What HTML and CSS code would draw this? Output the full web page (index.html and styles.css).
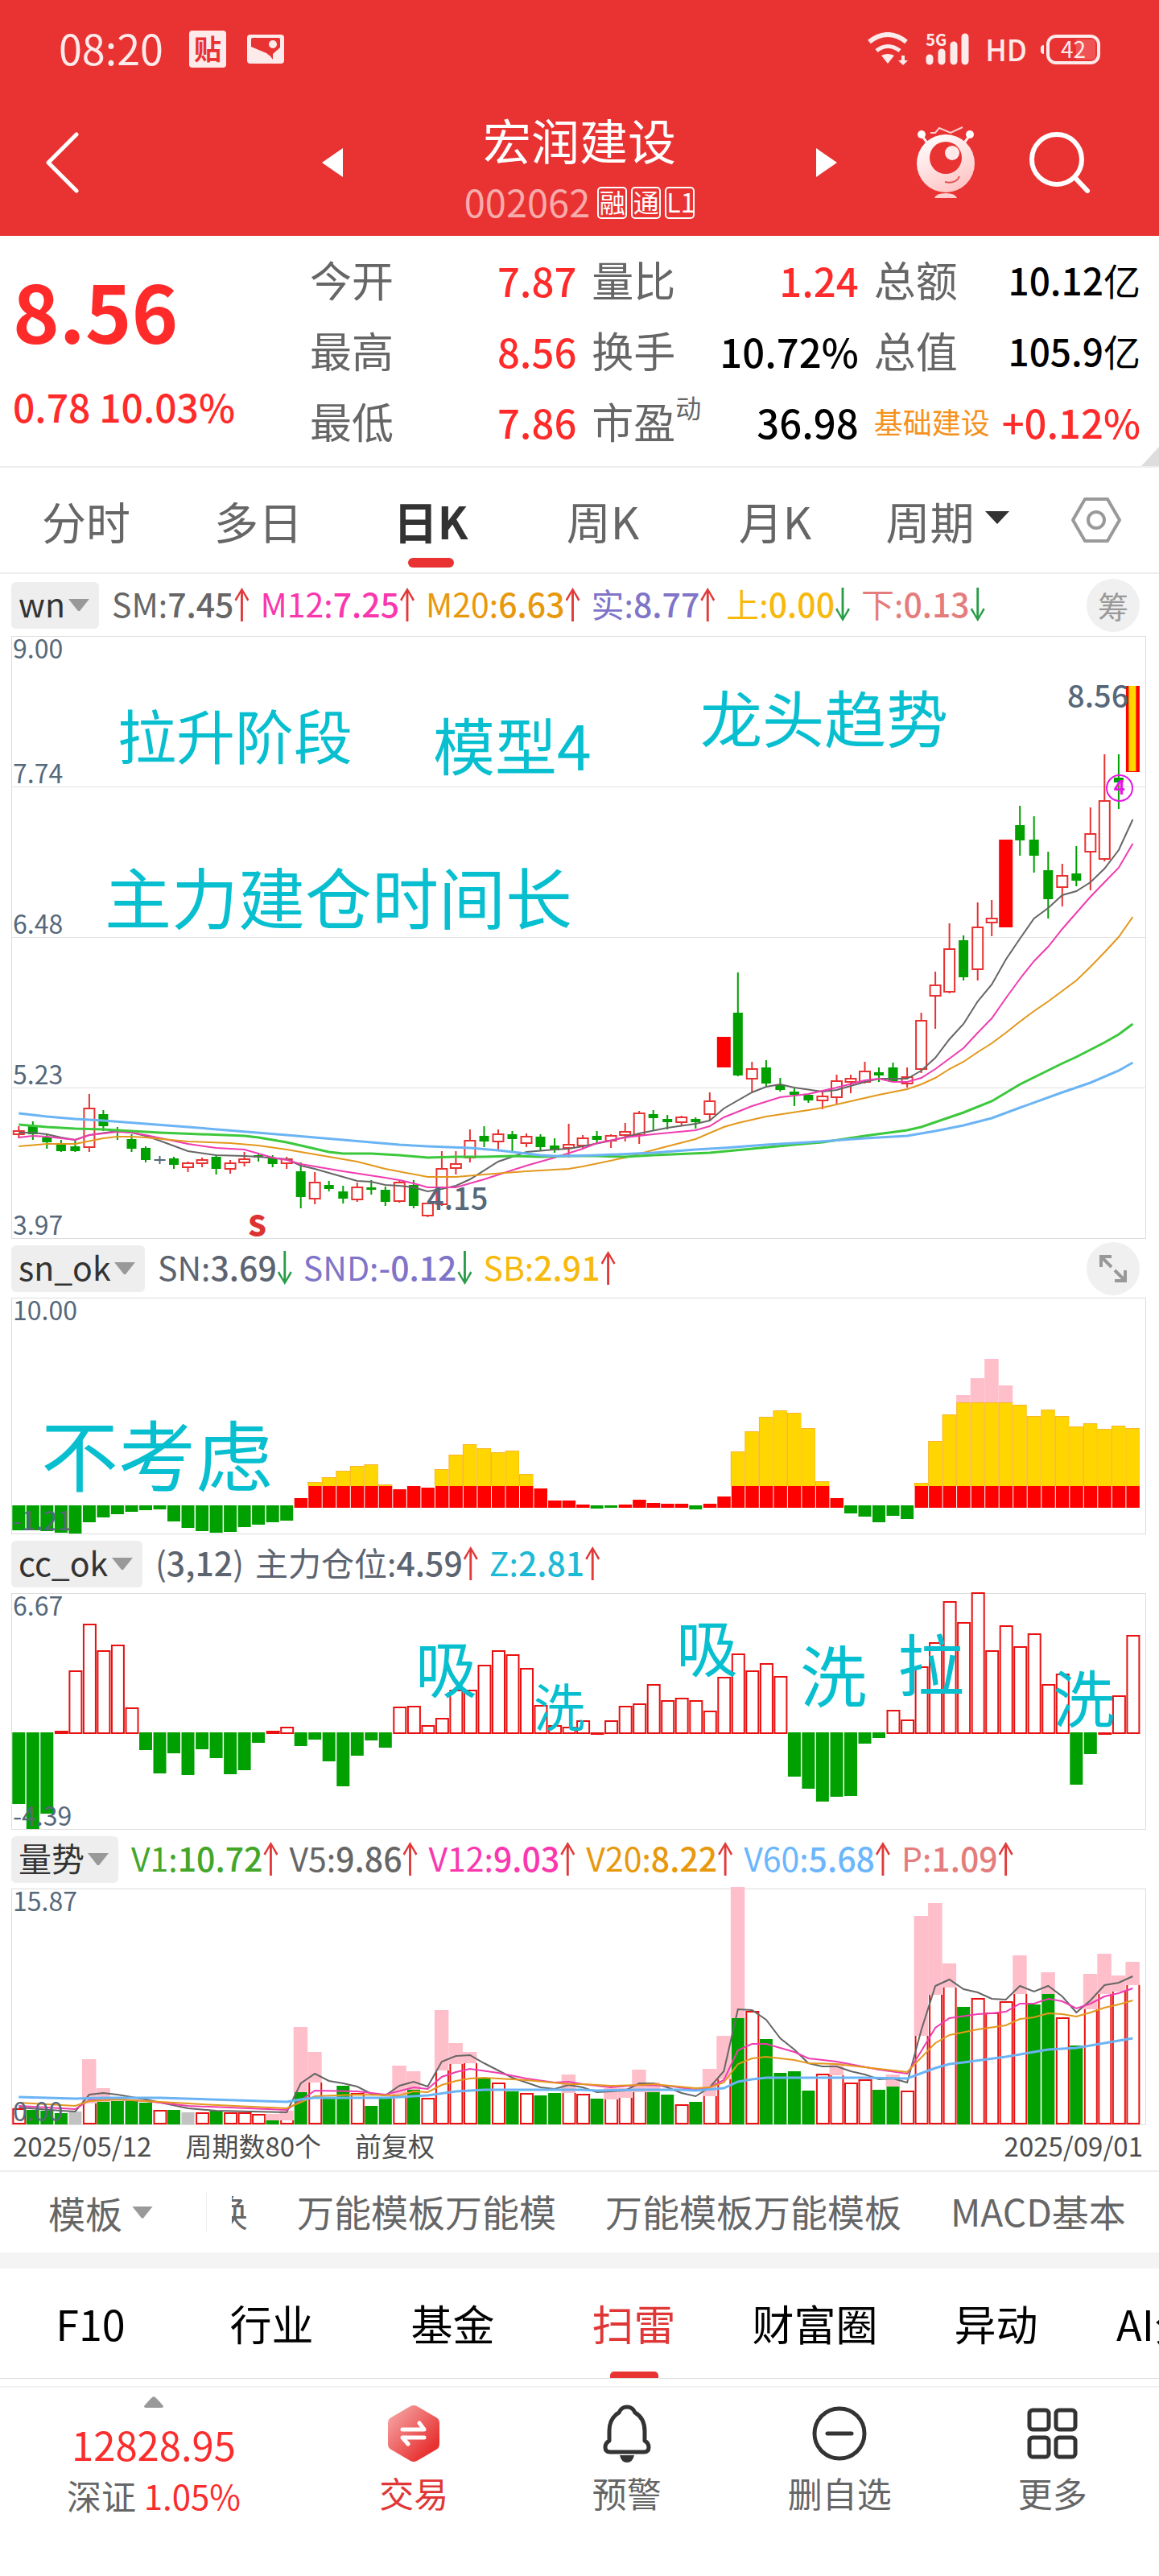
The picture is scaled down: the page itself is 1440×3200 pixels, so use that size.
FILE: index.html
```html
<!DOCTYPE html>
<html lang="zh-CN">
<head>
<meta charset="utf-8">
<meta name="viewport" content="width=device-width, initial-scale=1">
<title>宏润建设 002062</title>
<link rel="stylesheet" href="styles.css">
</head>
<body>
<header class="top">
  <div class="status">
    <div class="status-side">
      <span class="clock">08:20</span>
      <span class="badge">贴</span>
      <svg class="pic" width="46" height="36" viewBox="0 0 46 36" aria-hidden="true"><rect width="46" height="36" rx="4" fill="#fdeaea"/><path d="M5 6q0-2 2-2h32q2 0 2 2v10l-9 8v7q-3-5-8-8L5 15z" fill="#e93232"/><circle cx="32" cy="12" r="5" fill="#fdeaea"/></svg>
    </div>
    <div class="status-side">
      <svg width="52" height="42" viewBox="0 0 52 42" fill="none" stroke="#fdeaea" aria-hidden="true"><path d="M2 12Q25-6 48 12" stroke-width="6"/><path d="M11 23Q25 12 40 23" stroke-width="5"/><path d="M17 29q8-4 16 0l-8 10z" fill="#fdeaea" stroke="none"/><path d="M42 29h4v6h4l-6 6-6-6h4z" fill="#fdeaea" stroke="none"/></svg>
      <span class="signal"><small>5G</small>
        <svg width="54" height="40" viewBox="0 0 54 40" stroke="#fdeaea" stroke-width="9" stroke-linecap="round" aria-hidden="true"><path d="M5 31v4M20 24v11M35 15v20M49 5v30"/></svg>
      </span>
      <b class="hd">HD</b>
      <span class="battery"><i></i><em>42</em></span>
    </div>
  </div>
  <div class="title-bar">
    <button class="icon-btn back" aria-label="返回"><svg width="42" height="76" viewBox="0 0 42 76" fill="none" stroke="#fff" stroke-width="5" stroke-linecap="round" stroke-linejoin="round"><path d="M38 3L3 38l35 35"/></svg></button>
    <div class="title-mid">
      <button class="icon-btn" aria-label="上一只"><svg width="26" height="36" viewBox="0 0 26 36"><path d="M26 0v36L0 18z" fill="#fff"/></svg></button>
      <div class="name">
        <h1>宏润建设</h1>
        <p><span class="code">002062</span><span class="chip">融</span><span class="chip">通</span><span class="chip">L1</span></p>
      </div>
      <button class="icon-btn" aria-label="下一只"><svg width="26" height="36" viewBox="0 0 26 36"><path d="M0 0v36l26-18z" fill="#fff"/></svg></button>
    </div>
    <div class="title-tools">
      <button class="icon-btn" aria-label="智能助手"><svg width="74" height="92" viewBox="0 0 74 92" fill="none">
        <defs><linearGradient id="face" x1="0.2" y1="0" x2="0.7" y2="1"><stop offset="0" stop-color="#fff"/><stop offset="1" stop-color="#ffc2c2"/></linearGradient></defs>
        <path d="M7 12l9 12M67 12l-9 12" stroke="#ffecec" stroke-width="3"/><circle cx="7" cy="11" r="5" fill="#fff"/><circle cx="67" cy="11" r="5" fill="#fff"/>
        <path d="M18 9l6 0 5-6 14 6L58 2" stroke="#ffd0d0" stroke-width="2"/>
        <circle cx="37" cy="47" r="36" fill="url(#face)"/><circle cx="37" cy="40" r="20" fill="#e93232"/><circle cx="45" cy="34" r="9" fill="#ffeaea"/>
        <path d="M36 70q14 3 18-7" stroke="#e05050" stroke-width="2"/><path d="M23 90q2-6 14-6t14 6z" fill="#ffd0d0"/></svg></button>
      <button class="icon-btn" aria-label="搜索"><svg width="78" height="78" viewBox="0 0 78 78" fill="none" stroke="#fff" stroke-width="6" stroke-linecap="round"><circle cx="35" cy="35" r="31"/><path d="M57 57l16 17"/></svg></button>
    </div>
  </div>
</header>

<section class="quote">
  <div class="last"><strong>8.56</strong><span>0.78 10.03%</span></div>
  <dl class="stats">
    <div><dt>今开</dt><dd class="up">7.87</dd></div>
    <div><dt>量比</dt><dd class="up">1.24</dd></div>
    <div><dt>总额</dt><dd class="big">10.12<small>亿</small></dd></div>
    <div><dt>最高</dt><dd class="up">8.56</dd></div>
    <div><dt>换手</dt><dd>10.72%</dd></div>
    <div><dt>总值</dt><dd class="big">105.9<small>亿</small></dd></div>
    <div><dt>最低</dt><dd class="up">7.86</dd></div>
    <div><dt>市盈<sup>动</sup></dt><dd>36.98</dd></div>
    <div><dt class="sector">基础建设</dt><dd class="up">+0.12%</dd></div>
  </dl>
</section>

<nav class="periods">
  <button>分时</button><button>多日</button><button class="on">日K</button><button>周K</button><button>月K</button>
  <label class="pick"><select aria-label="周期"><option>周期</option></select><svg width="30" height="16" viewBox="0 0 30 16"><path d="M0 0h30L15 16z" fill="#333"/></svg></label>
  <button aria-label="设置"><svg width="64" height="58" viewBox="0 0 64 58" fill="none" stroke="#999" stroke-width="4" stroke-linejoin="round"><path d="M18 3h28l15 26-15 26H18L3 29z"/><circle cx="32" cy="29" r="10"/></svg></button>
</nav>

<main class="charts">
  <div class="legend">
    <label class="tag"><select aria-label="主图指标"><option>wn</option></select><i></i></label>
    <span class="c-gray rise">SM:<b>7.45</b></span><span class="c-pink rise">M12:<b>7.25</b></span><span class="c-orange rise">M20:<b>6.63</b></span><span class="c-violet rise">实:<b>8.77</b></span><span class="c-gold fall">上:<b>0.00</b></span><span class="c-rose fall">下:<b>0.13</b></span>
    <button class="round">筹</button>
  </div>
  <div class="plot tall">
    <svg id="k" viewBox="0 0 1410 749" preserveAspectRatio="none"></svg>
    <span class="axis first">9.00</span><span class="axis" data-y="159">7.74</span><span class="axis" data-y="346">6.48</span><span class="axis" data-y="533">5.23</span><span class="axis last-axis">3.97</span>
    <span class="note n72" data-x="132" data-y="85">拉升阶段</span>
    <span class="note n76" data-x="524" data-y="95">模型4</span>
    <span class="note n76" data-x="856" data-y="61">龙头趋势</span>
    <span class="note n82" data-x="116" data-y="281">主力建仓时间长</span>
    <span class="mark" data-x="1312" data-y="54">8.56</span>
    <span class="mark" data-x="516" data-y="678">4.15</span>
    <span class="mark sell" data-x="294" data-y="712">S</span>
    <span class="ring" data-x="1360" data-y="172">4</span>
  </div>

  <div class="legend">
    <label class="tag"><select aria-label="副图一指标"><option>sn_ok</option></select><i></i></label>
    <span class="c-slate fall">SN:<b>3.69</b></span><span class="c-violet fall">SND:<b>-0.12</b></span><span class="c-gold rise">SB:<b>2.91</b></span>
    <button class="round" aria-label="展开"><svg width="34" height="34" viewBox="0 0 34 34" fill="none" stroke="#999" stroke-width="4"><path d="M2 15V2h13M2 2l13 13M32 19v13H19M32 32L19 19"/></svg></button>
  </div>
  <div class="plot">
    <svg id="sn" viewBox="0 0 1410 294" preserveAspectRatio="none"></svg>
    <span class="axis first">10.00</span><span class="axis last-axis">-1.21</span>
    <span class="note n96" data-x="37" data-y="144">不考虑</span>
  </div>

  <div class="legend">
    <label class="tag"><select aria-label="副图二指标"><option>cc_ok</option></select><i></i></label>
    <span class="c-slate plain">(<b>3,12</b>)</span><span class="c-slate rise">主力仓位:<b>4.59</b></span><span class="c-cyan rise">Z:<b>2.81</b></span>
  </div>
  <div class="plot">
    <svg id="cc" viewBox="0 0 1410 294" preserveAspectRatio="none"></svg>
    <span class="axis first">6.67</span><span class="axis last-axis">-4.39</span>
    <span class="note n76" data-x="502" data-y="52">吸</span>
    <span class="note n64" data-x="649" data-y="106">洗</span>
    <span class="note n76" data-x="826" data-y="26">吸</span>
    <span class="note n82" data-x="980" data-y="58">洗</span>
    <span class="note n82" data-x="1101" data-y="44">拉</span>
    <span class="note n76" data-x="1294" data-y="89">洗</span>
  </div>

  <div class="legend">
    <label class="tag"><select aria-label="副图三指标"><option>量势</option></select><i></i></label>
    <span class="c-green rise">V1:<b>10.72</b></span><span class="c-gray rise">V5:<b>9.86</b></span><span class="c-pink rise">V12:<b>9.03</b></span><span class="c-orange rise">V20:<b>8.22</b></span><span class="c-blue rise">V60:<b>5.68</b></span><span class="c-rose rise">P:<b>1.09</b></span>
  </div>
  <div class="plot">
    <svg id="vol" viewBox="0 0 1410 294" preserveAspectRatio="none"></svg>
    <span class="axis first">15.87</span><span class="axis last-axis">0.00</span>
  </div>
  <div class="dates"><span>2025/05/12</span><span>周期数80个</span><span>前复权</span><span class="end">2025/09/01</span></div>
</main>

<div class="templates">
  <label class="pick"><select aria-label="模板"><option>模板</option></select><i></i></label>
  <div class="template-list">
    <button class="cut"><span>切换</span></button><button>万能模板万能模</button><button>万能模板万能模板</button><button>MACD基本</button>
  </div>
</div>

<nav class="sections">
  <a href="#f10">F10</a><a href="#industry">行业</a><a href="#fund">基金</a><a href="#risk" class="on">扫雷</a><a href="#wealth">财富圈</a><a href="#moves">异动</a><a href="#ai">AI分析</a>
</nav>

<footer class="dock">
  <a class="index" href="#index">
    <svg width="26" height="14" viewBox="0 0 26 14"><path d="M13 0q2 0 12 12 0 2-2 2H3q-2 0-2-2Q11 0 13 0z" fill="#999"/></svg>
    <b>12828.95</b><span>深证 <em>1.05%</em></span>
  </a>
  <button class="trade"><svg width="64" height="72" viewBox="0 0 64 72" fill="none">
    <defs><linearGradient id="hex" x1="0" y1="0" x2="1" y2="1"><stop offset="0.1" stop-color="#f5a0a0"/><stop offset="0.8" stop-color="#e83232"/></linearGradient></defs>
    <path d="M28 2q4-2 8 0l24 14q4 2 4 7v26q0 5-4 7L36 70q-4 2-8 0L4 56q-4-2-4-7V23q0-5 4-7z" fill="url(#hex)"/><path d="M18 31h27l-6-8M45 41H18l7 8" stroke="#fff" stroke-width="5" stroke-linecap="round" stroke-linejoin="round"/></svg>交易</button>
  <button><svg width="64" height="72" viewBox="0 0 64 72" fill="none"><path d="M32 3q7 0 10 7 12 7 12 23v12q5 3 5 8 0 6-6 6H11q-6 0-6-6 0-5 5-8V33q0-16 12-23 3-7 10-7z" stroke="#333" stroke-width="5" stroke-linejoin="round"/><path d="M23 63h18q-2 9-9 9t-9-9z" fill="#333"/></svg>预警</button>
  <button><svg width="72" height="72" viewBox="0 0 72 72" fill="none" stroke="#333" stroke-width="5" stroke-linecap="round"><circle cx="36" cy="36" r="31"/><path d="M21 36h30"/></svg>删自选</button>
  <button><svg width="72" height="72" viewBox="0 0 72 72" fill="none" stroke="#333" stroke-width="5"><rect x="7" y="7" width="24" height="24" rx="4"/><rect x="40" y="7" width="24" height="24" rx="4"/><rect x="7" y="41" width="24" height="24" rx="4"/><rect x="40" y="41" width="24" height="24" rx="4"/></svg>更多</button>
</footer>
<script src="charts.js"></script>
</body>
</html>
```
FILE: styles.css
```css
* { box-sizing: border-box; margin: 0; padding: 0; }
body { min-height: 100vh; display: flex; flex-direction: column; background: #fff; color: #000; font-family: "Noto Sans CJK SC", "Noto Sans", sans-serif; font-size: 48px; line-height: 1; overflow-x: hidden; }
button, select { font: inherit; color: inherit; border: 0; background: none; appearance: none; white-space: nowrap; }
a { color: inherit; text-decoration: none; }
i, em { font-style: normal; }
svg { display: block; flex: none; }

.top { background: #e93232; color: #fff; padding-bottom: 8px; }
.status { display: flex; justify-content: space-between; align-items: center; height: 122px; padding: 0 73px; color: #fdeaea; }
.status-side { display: flex; align-items: center; gap: 20px; }
.clock { font-size: 52px; line-height: 48px; margin: 0 12px 4px 0; }
.badge { width: 46px; height: 46px; margin-right: 6px; border-radius: 4px; background: #fdeaea; color: #e93232; font-size: 34px; font-weight: 700; line-height: 43px; text-align: center; }
.signal { position: relative; }
.signal small { position: absolute; left: 0; top: -2px; font-size: 20px; font-weight: 700; }
.hd { font-size: 36px; line-height: 40px; font-weight: 500; padding-bottom: 2px; }
.battery { position: relative; width: 67px; height: 37px; margin-left: 4px; border: 4px solid #fdeaea; border-radius: 12px; font-size: 28px; line-height: 26px; text-align: center; }
.battery::before { content: ""; position: absolute; left: -11px; top: 9px; width: 4px; height: 11px; border-radius: 4px 0 0 4px; background: #fdeaea; }
.battery i { position: absolute; right: 2px; top: 2px; width: 24px; height: 25px; border-radius: 0 4px 4px 0; background: #f05353; }
.battery em { position: relative; }

.title-bar { display: grid; grid-template-columns: 1fr 640px 1fr; align-items: center; height: 163px; padding-bottom: 4px; }
.icon-btn { display: block; }
.back { margin-left: 57px; }
.title-mid { display: flex; align-items: center; justify-content: space-between; }
.name { padding-top: 10px; text-align: center; }
.name h1 { font-size: 60px; font-weight: 400; line-height: 76px; }
.name p { display: flex; align-items: center; gap: 5px; padding-top: 14px; }
.code { font-size: 47px; line-height: 50px; color: #f9abab; margin: 0 4px 4px 0; }
.chip { width: 37px; height: 40px; border: 2px solid #fff; border-radius: 5px; font-size: 32px; line-height: 33px; text-align: center; }
.title-tools { display: flex; align-items: center; justify-content: flex-end; gap: 66px; padding-right: 84px; }

.quote { position: relative; display: flex; min-height: 288px; padding: 10px 23px 10px 16px; border-bottom: 2px solid #eee; }
.quote::after { content: ""; position: absolute; right: 0; bottom: 0; width: 22px; height: 24px; background: #ddd; clip-path: polygon(100% 0, 100% 100%, 0 100%); }
.last { width: 369px; color: #ff2a2a; }
.last strong { display: block; padding-top: 27px; font-size: 98px; line-height: 108px; font-weight: 700; }
.last span { display: block; padding-top: 42px; font-size: 48px; line-height: 48px; font-weight: 500; white-space: nowrap; }
.stats { flex: 1; display: grid; grid-template-columns: repeat(3, 1fr); grid-auto-rows: 88px; column-gap: 19px; }
.stats div { display: flex; align-items: center; justify-content: space-between; white-space: nowrap; }
.stats dt { font-size: 52px; color: #666; }
.stats dt sup { font-size: 32px; line-height: 0; vertical-align: 26px; }
.stats dd { font-size: 49px; font-weight: 500; }
.stats .big { font-size: 46px; }
.stats .big small { font-size: 46px; font-weight: 400; }
.stats .sector { font-size: 36px; color: #f5921e; }
.stats .up { color: #ff2a2a; }

.periods { display: grid; grid-template-columns: repeat(6, 214fr) 156fr; height: 132px; border-bottom: 2px solid #eee; color: #666; font-size: 55px; }
.periods > * { position: relative; display: flex; align-items: center; justify-content: center; }
.periods .on { color: #333; font-weight: 700; }
.periods .on::after { content: ""; position: absolute; bottom: 6px; left: calc(50% - 28px); width: 57px; height: 12px; border-radius: 6px; background: #e93232; }
.pick { gap: 12px; }
.pick svg { margin-bottom: 6px; }

.charts { padding: 0 16px 0 14px; }
.legend { display: flex; align-items: center; gap: 14px; height: 73px; font-size: 41px; white-space: nowrap; }
.legend:first-child { height: 77px; }
.tag { display: flex; align-items: center; gap: 4px; height: 58px; margin-right: 2px; padding: 0 12px 0 9px; border-radius: 6px; background: #eee; color: #333; font-size: 41px; }
.tag select { height: 58px; line-height: 52px; padding-bottom: 6px; }
.tag i, .templates i { width: 26px; height: 15px; background: #999; clip-path: polygon(0 0, 100% 0, 54% 100%, 46% 100%); }
.rise, .fall, .plain { display: flex; align-items: center; line-height: 48px; padding-bottom: 6px; }
.legend b { font-weight: 500; }
.rise::after, .fall::after { content: ""; width: 18px; height: 42px; margin: 5px 0 0 1px; background: #e03a3a; clip-path: polygon(50% 0, 100% 36%, 88% 40%, 58% 16%, 58% 100%, 42% 100%, 42% 16%, 12% 40%, 0 36%); }
.fall::after { background: #2a9d4a; clip-path: polygon(50% 100%, 100% 64%, 88% 60%, 58% 84%, 58% 0, 42% 0, 42% 84%, 12% 60%, 0 64%); }
.round { display: flex; align-items: center; justify-content: center; width: 66px; height: 66px; margin: 0 8px 0 auto; border-radius: 50%; background: #f0f0f0; color: #999; font-size: 38px; }
.c-gray { color: #666; }
.c-slate { color: #5c6470; }
.c-pink { color: #fa37ae; }
.c-orange { color: #e8980c; }
.c-violet { color: #8074c8; }
.c-gold { color: #f7b90c; }
.c-rose { color: #e57c7c; }
.c-cyan { color: #1cbad6; }
.c-green { color: #43a629; }
.c-blue { color: #6bb6fc; }

.plot { position: relative; }
.plot svg { width: 100%; height: 294px; overflow: visible; }
.plot.tall svg { height: 749px; }
.plot span { position: absolute; white-space: nowrap; }
.axis { left: 2px; color: #56687a; font-size: 32px; line-height: 20px; }
.axis.first { top: 4px; }
.axis.last-axis { bottom: 9px; }
.note { color: #08bfd0; }
.n64 { font-size: 64px; }
.n72 { font-size: 73px; }
.n76 { font-size: 77px; }
.n82 { font-size: 83px; }
.n96 { font-size: 96px; }
.mark { color: #56687a; font-size: 38px; font-weight: 500; }
.mark.sell { color: #dc3232; font-size: 36px; font-weight: 900; }
.ring { width: 34px; height: 34px; border: 2px solid #e815e8; border-radius: 50%; color: #e815e8; font-size: 24px; font-weight: 700; line-height: 26px; text-align: center; }
.dates { display: flex; align-items: center; gap: 42px; height: 56px; padding: 0 4px 6px 2px; color: #4d4d4d; font-size: 33px; }
.dates .end { margin-left: auto; }

.templates { display: flex; align-items: center; height: 122px; border-top: 2px solid #eee; border-bottom: 20px solid #f4f4f4; color: #666; font-size: 46px; }
.templates .pick { display: flex; align-items: center; flex: none; width: 257px; height: 50px; padding-left: 60px; border-right: 1px solid #eee; }
.pick select { line-height: 64px; height: 68px; }
.template-list { display: flex; align-items: center; gap: 61px; padding-left: 31px; overflow: hidden; height: 80px; }
.template-list button { flex: none; line-height: 68px; padding-bottom: 4px; }
.template-list .cut { display: flex; justify-content: flex-end; width: 20px; overflow: hidden; }

.sections { display: flex; height: 137px; border-bottom: 1px solid #ddd; overflow: hidden; font-size: 52px; white-space: nowrap; }
.sections a { position: relative; display: flex; flex: 0 0 225px; align-items: center; justify-content: center; }
.sections .on { color: #e03636; }
.sections .on::after { content: ""; position: absolute; bottom: 0; left: calc(50% - 30px); width: 60px; height: 8px; border-radius: 5px 5px 0 0; background: #e93232; }

.dock { flex: 1; display: grid; grid-template-columns: 382px repeat(4, 1fr); align-items: start; margin-top: 9px; padding-top: 11px; border-top: 2px solid #f2f2f2; color: #666; font-size: 43px; }
.dock button { display: flex; flex-direction: column; align-items: center; gap: 12px; padding-top: 10px; line-height: 50px; }
.dock .trade { color: #e03636; }
.index { display: flex; flex-direction: column; align-items: center; }
.index b { padding: 20px 0 13px; font-size: 49px; line-height: 50px; font-weight: 400; color: #fa2d2d; }
.index span { line-height: 50px; }
.index em { font-size: 42px; color: #fa2d2d; }
```
FILE: charts.js
```js
const COUNT = 80, STEP = 17.52, FIRST = 9.3, WIDTH = 1410;
const RED = '#e83232', HOLLOW = '#e81010', GREEN = '#00a000', GOLD = '#ffd600', PINK = '#ffbfca';
const cx = i => FIRST + STEP * i;
const rect = (x, y, w, h, fill, stroke) =>
  `<rect x="${x.toFixed(1)}" y="${y}" width="${w}" height="${Math.max(h, 1)}" fill="${fill}"${stroke ? ` stroke="${stroke}" stroke-width="2"` : ''}/>`;
const frame = h => `<rect x=".5" y=".5" width="${WIDTH - 1}" height="${h - 1}" fill="none" stroke="#ddd"/>`;
const line = (text, color, w) => {
  const pts = text.split(' ').map(p => { const [i, y] = p.split(':'); return cx(+i).toFixed(1) + ',' + y; });
  return `<polyline points="${pts.join(' ')}" fill="none" stroke="${color}" stroke-width="${w}"/>`;
};

// kind, high, body top, body bottom, low
const candles = `r 609 614 620 624|g 603 609 619 626|g 619 623 629 637|g 626 632 640 641|g 627 634 640 641|r 569 586 636 641|g 589 594 609 615|g 610 615 617 626|g 619 625 637 641|g 634 636 651 654
x 646 650 651 656|g 647 649 657 662|r 653 654 661 666|r 648 650 656 660|g 645 647 662 669|r 651 654 663 668|r 641 649 655 659|g 643 645 648 653|g 645 648 656 660|r 647 649 656 662
g 654 665 697 711|r 666 678 700 706|g 677 682 687 690|g 683 690 699 705|r 679 684 701 703|g 676 685 688 694|g 684 688 703 708|r 676 678 703 704|g 676 682 708 711|r 704 704 721 722
r 640 661 707 708|r 640 655 662 669|r 613 626 649 654|g 609 621 628 635|r 613 618 629 638|g 615 619 625 641|r 618 621 631 635|g 619 622 635 640|g 624 633 639 642|r 606 631 637 648
r 620 623 634 638|g 615 621 626 630|r 619 620 628 636|r 605 615 621 628|r 590 592 621 631|g 589 594 599 614|g 595 600 604 613|r 596 597 605 608|g 598 600 604 612|r 567 577 595 602
R 498 498 536 536|g 418 468 546 547|r 529 537 551 566|g 527 536 556 559|g 549 558 564 566|g 562 566 570 584|g 569 570 577 580|r 565 571 578 588|r 545 552 574 581|r 545 549 555 568
r 529 540 555 555|g 536 542 546 554|g 530 536 554 555|r 536 547 557 561|r 468 477 539 543|r 417 433 448 488|r 357 388 443 444|g 372 378 424 428|r 331 361 415 428|r 328 350 357 373
R 253 253 362 362|g 211 235 254 273|g 224 253 273 294|g 268 291 327 351|r 283 297 313 336|g 261 295 304 311|r 213 245 269 316|r 147 204 278 280|g 147 176 182 215|Y 62 62 169 170`.split(/[|\n]/);

let out = frame(749);
for (const y of [187, 374, 561]) out += `<path d="M0 ${y}.5H${WIDTH}" stroke="#e2e2e2"/>`;
candles.forEach((row, i) => {
  const [k, ...v] = row.split(' '), [hi, top, bot, lo] = v.map(Number), x = cx(i);
  if (k === 'R') out += rect(x - 8.5, top, 17, bot - top, '#f00');
  else if (k === 'Y') out += rect(x - 8.5, top, 17, bot - top, '#f00') + rect(x - 5, top, 9, bot - top - 1, GOLD);
  else if (k === 'x') out += `<path d="M${x} ${hi}V${lo}M${x - 7} 651H${x + 7}" stroke="#56687a" stroke-width="2"/>`;
  else if (k === 'g') out += rect(x - 1, hi, 2, lo - hi, GREEN) + rect(x - 6, top, 12, bot - top, GREEN);
  else out += rect(x - 1, hi, 2, top - hi, RED) + rect(x - 1, bot, 2, lo - bot, RED) + rect(x - 6.5, top + 1, 13, bot - top - 2, 'none', RED);
});
out += line('0:617 1:617 2:619 3:623 4:626 5:620 7:615 8:617 9:621 10:627 12:640 14:645 16:646 17:647 19:650 20:658 21:662 22:667 24:677 25:678 26:682 27:683 28:685 29:690 30:687 31:683 32:675 34:653 36:641 38:638 39:637 40:634 42:627 44:618 46:611 48:606 49:602 50:587 52:567 53:560 54:557 55:561 57:566 58:564 60:554 61:550 63:550 64:540 65:524 66:501 67:482 68:454 69:433 70:402 71:376 72:351 73:338 74:322 75:317 76:306 77:289 78:266 79:228', '#666', 2);
out += line('0:623 1:621 2:622 4:626 5:620 7:616 8:617 9:620 12:631 14:636 16:638 18:648 19:651 20:656 23:665 26:673 27:676 28:680 29:685 31:685 33:675 36:658 38:648 40:637 41:630 43:623 45:619 48:614 49:609 50:598 52:584 54:573 56:569 58:561 60:552 61:550 62:554 63:554 64:549 65:538 66:525 67:512 68:493 69:475 70:450 71:426 72:404 73:386 74:364 75:344 76:324 77:306 78:288 79:258', '#f03cb0', 2);
out += line('0:634 2:631 4:631 6:624 7:622 8:622 9:623 12:628 15:630 17:633 19:638 21:644 24:653 26:662 29:672 31:672 33:669 36:665 39:662 40:659 43:648 46:634 48:625 50:610 51:605 53:597 56:589 57:586 61:570 63:563 64:557 65:549 66:538 67:529 68:517 69:506 70:493 71:479 72:466 73:454 74:441 75:428 76:411 77:393 78:374 79:349', '#e3981c', 2);
out += line('0:607 2:610 4:612 6:613 10:617 16:621 17:623 19:629 20:633 22:641 23:643 25:643 27:645 29:648 31:647 33:647 35:646 37:647 39:646 41:646 43:647 45:645 49:642 52:637 55:632 57:629 60:621 63:614 64:610 66:598 67:592 69:578 71:557 74:531 75:523 77:505 78:495 79:482', '#3cc83c', 3);
out += line('0:593 1:595 2:597 4:600 6:602 12:610 19:620 27:632 29:634 32:636 34:639 36:643 37:645 38:646 39:646 41:645 45:642 48:638 49:637 50:636 53:632 56:629 60:624 63:621 65:615 67:608 69:599 71:586 74:567 76:555 78:540 79:530', '#6bb4f4', 3);
document.getElementById('k').innerHTML = out;

// bar ends; below the zero line green, above it red, then gold, then pink
const sn = [289,289,290,292,293,279,273,269,266,264,263,278,286,290,292,291,285,282,279,277,249,229,223,215,209,207,232,238,234,236,213,195,182,187,192,190,219,237,252,252,257,262,261,257,251,255,256,256,263,256,247,191,166,148,140,143,162,228,249,268,272,279,271,275,230,178,145,121,100,76,109,133,147,139,147,160,156,163,159,162];
out = frame(294);
sn.forEach((y, i) => {
  const x = cx(i) - 8;
  if (y > 259) { out += rect(x, 258, 16, y - 258, GREEN); return; }
  if (y < 130) out += rect(x - 1, y, 17.5, 130 - y, PINK);
  if (y < 233) { const t = Math.max(y, 130); out += rect(x - 1, t, 17.5, 234 - t, '#f8b62c') + rect(x, t + 1, 16, 233 - t, GOLD); }
  const r = Math.max(y, 234);
  out += rect(x, r, 16.5, 261 - r, '#f00');
});
document.getElementById('sn').innerHTML = out;

const cc = [262,293,274,171,96,38,71,64,142,195,224,199,226,194,205,225,220,186,171,166,190,182,209,240,202,183,192,141,140,164,155,120,120,89,71,76,93,139,164,166,158,173,158,140,137,113,133,130,133,146,104,75,96,87,103,228,243,259,253,252,187,180,145,157,91,61,10,36,-1,71,40,66,50,113,100,238,200,173,127,52];
out = frame(294);
cc.forEach((y, i) => {
  const x = cx(i) - 8;
  out += y > 174 ? rect(x, 173, 16, y - 173, GREEN) : rect(x + 1, y + 1, 15, 173 - y, 'none', HOLLOW);
});
document.getElementById('cc').innerHTML = out;

// kind, bar top, optional top of the projected volume
const vol = 'r273 g275 g276 g279 x277 r267,212 g265,248 g264 g264 g266 r275 g275 x278 r278 g276 r278 r278 r280 g288,280 r288,276 g253,172 r241,203 g260 g245 r254 g270 g261 r257,220 g250,227 r260 r226,151 r218,192 r217,203 g236 r241 g252 r254 g257 g254 r254,231 r255 g261 r262,248 r260,248 r253,225 g253,241 g256 r268 g265 r258,224 r237,183 g161,-2 r152 g187 g229 g227 g251 r230 r232,217 r241 r237 g250 g246,231 r251 r183,34 r132,18 r123,93 g147 r136 r154 r140 r131,83 g144 g131,104 r160 g195 r150,106 r131,81 r128,108 r120,91'.split(' ');
out = frame(294);
vol.forEach((v, i) => {
  const [top, est] = v.slice(1).split(',').map(Number), x = cx(i) - 8;
  if (est !== undefined) out += rect(x - 1, est, 17.5, top - est, PINK);
  if (v[0] === 'r') {
    out += est === undefined ? rect(x + 1, top + 1, 15, 291 - top, '#fff', HOLLOW)
      : rect(x, top, 17, 293 - top, '#fff') + `<path d="M${x + 1} ${top}V292H${x + 16}V${top}" fill="none" stroke="${HOLLOW}" stroke-width="2"/>`;
  } else out += rect(x, top, 16, 293 - top, v[0] === 'g' ? GREEN : '#c2c2c2');
});
out += line('0:272 3:276 4:277 5:256 6:254 7:256 9:262 12:273 14:276 19:278 20:242 21:230 22:239 23:242 24:246 25:255 26:257 27:245 28:240 29:246 30:215 31:208 32:207 33:217 35:235 37:247 38:249 39:244 40:247 41:253 43:251 44:242 45:242 46:247 47:254 48:258 49:247 50:227 51:150 52:151 53:163 54:186 55:200 56:217 57:221 58:221 59:227 60:231 61:237 62:236 63:241 64:176 65:121 66:113 67:125 68:129 69:137 70:138 71:121 72:128 73:121 74:134 75:154 76:139 77:120 78:117 79:109', '#666', 2);
out += line('0:270 4:274 5:263 7:262 9:264 12:270 19:275 21:251 24:252 26:256 28:247 29:249 30:234 31:228 32:224 34:229 36:236 38:241 39:240 40:243 42:247 44:244 46:245 48:250 49:247 50:238 51:201 52:193 53:193 55:203 56:211 58:215 61:225 63:230 64:202 65:173 66:161 68:156 69:155 70:153 71:143 72:143 73:137 74:140 75:149 76:143 77:134 78:130 79:124', '#f03cb0', 2);
out += line('0:266 4:270 5:264 7:262 9:264 13:268 19:273 21:258 24:256 27:257 28:252 29:253 30:244 31:239 32:236 33:235 36:238 39:243 40:243 42:245 44:244 45:243 48:248 49:247 50:241 51:218 52:211 53:209 55:213 56:217 58:218 60:222 61:224 63:228 65:192 66:182 68:175 70:170 71:162 72:160 73:155 74:156 75:159 76:154 77:148 78:144 79:139', '#e3981c', 2);
out += line('0:259 4:261 6:260 10:260 19:265 20:262 21:260 24:260 26:260 29:257 31:252 33:250 36:250 40:250 41:251 44:250 47:250 48:251 50:248 51:240 52:237 53:235 60:235 63:236 65:223 66:218 67:216 70:209 72:203 73:200 75:198 77:192 79:186', '#6bb4f4', 3);
document.getElementById('vol').innerHTML = out;

for (const el of document.querySelectorAll('.plot [data-y]')) {
  el.style.top = el.dataset.y + 'px';
  if (el.dataset.x) el.style.left = (el.dataset.x / WIDTH * 100).toFixed(2) + '%';
}
```
